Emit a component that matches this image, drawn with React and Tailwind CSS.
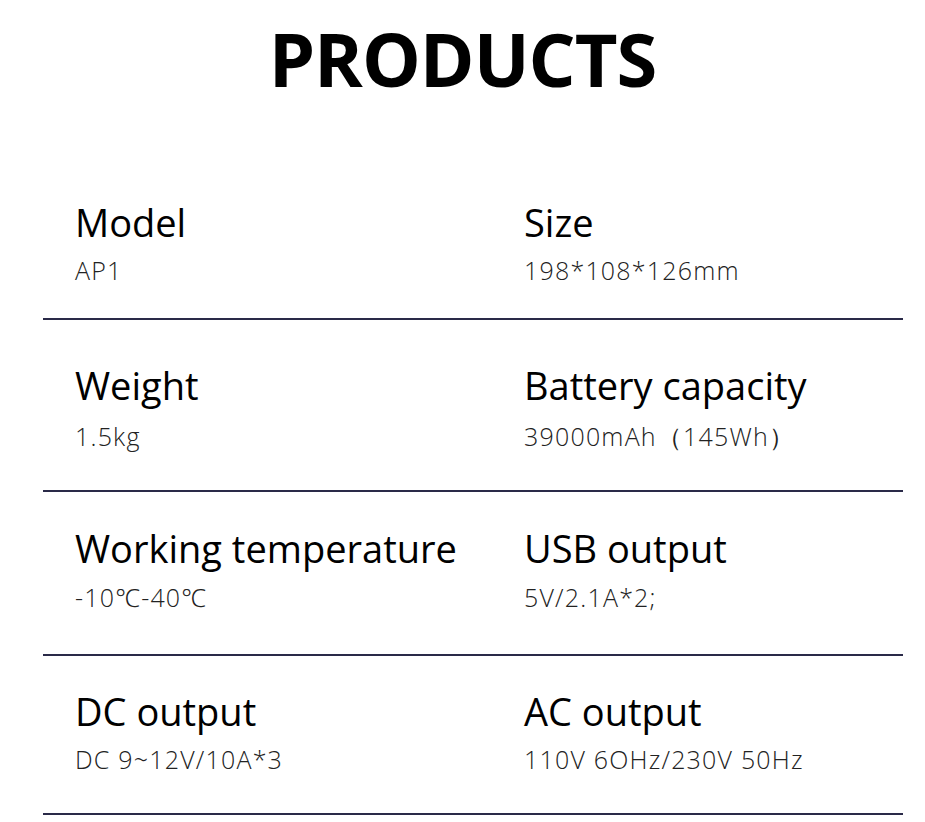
export default function App() {
  const rows = [
    { a: ["Model", "AP1"], b: ["Size", "198*108*126mm"], pt: "pt-[0px]", gap: "mt-[10px]", pb: "pb-[32px]" },
    { a: ["Weight", "1.5kg"], b: ["Battery capacity", "39000mAh（145Wh）"], pt: "pt-[43px]", gap: "mt-[13px]", pb: "pb-[38px]" },
    { a: ["Working temperature", "-10℃-40℃"], b: ["USB output", "5V/2.1A*2;"], pt: "pt-[34px]", gap: "mt-[11px]", pb: "pb-[41px]" },
    { a: ["DC output", "DC 9~12V/10A*3"], b: ["AC output", "110V 6OHz/230V 50Hz"], pt: "pt-[33px]", gap: "mt-[10px]", pb: "pb-[38px]" },
  ];
  const Cell = ({ item, gap }) => (
    <div className="flex flex-col">
      <div className="text-[38px] leading-[44px] text-black whitespace-nowrap">{item[0]}</div>
      <div className={`${gap} text-[25px] leading-[32px] font-light text-[#222] tracking-[1.2px] whitespace-nowrap`}>{item[1]}</div>
    </div>
  );
  return (
    <div className="w-[925px] h-[822px] bg-white overflow-hidden" style={{ fontFamily: '"Open Sans", "Noto Sans", sans-serif' }}>
      <div className="pt-[19px] h-[200px] flex justify-center">
        <h1 className="text-[74px] leading-[80px] font-bold text-black tracking-[-1px]">PRODUCTS</h1>
      </div>
      <div className="ml-[43px] w-[860px]">
        {rows.map((r, i) => (
          <div key={i} className={`${r.pt} ${r.pb} border-b-2 border-[#2a2a48]`}>
            <div className="grid grid-cols-[449px_1fr] pl-[32px]">
              <Cell item={r.a} gap={r.gap} />
              <Cell item={r.b} gap={r.gap} />
            </div>
          </div>
        ))}
      </div>
    </div>
  );
}
